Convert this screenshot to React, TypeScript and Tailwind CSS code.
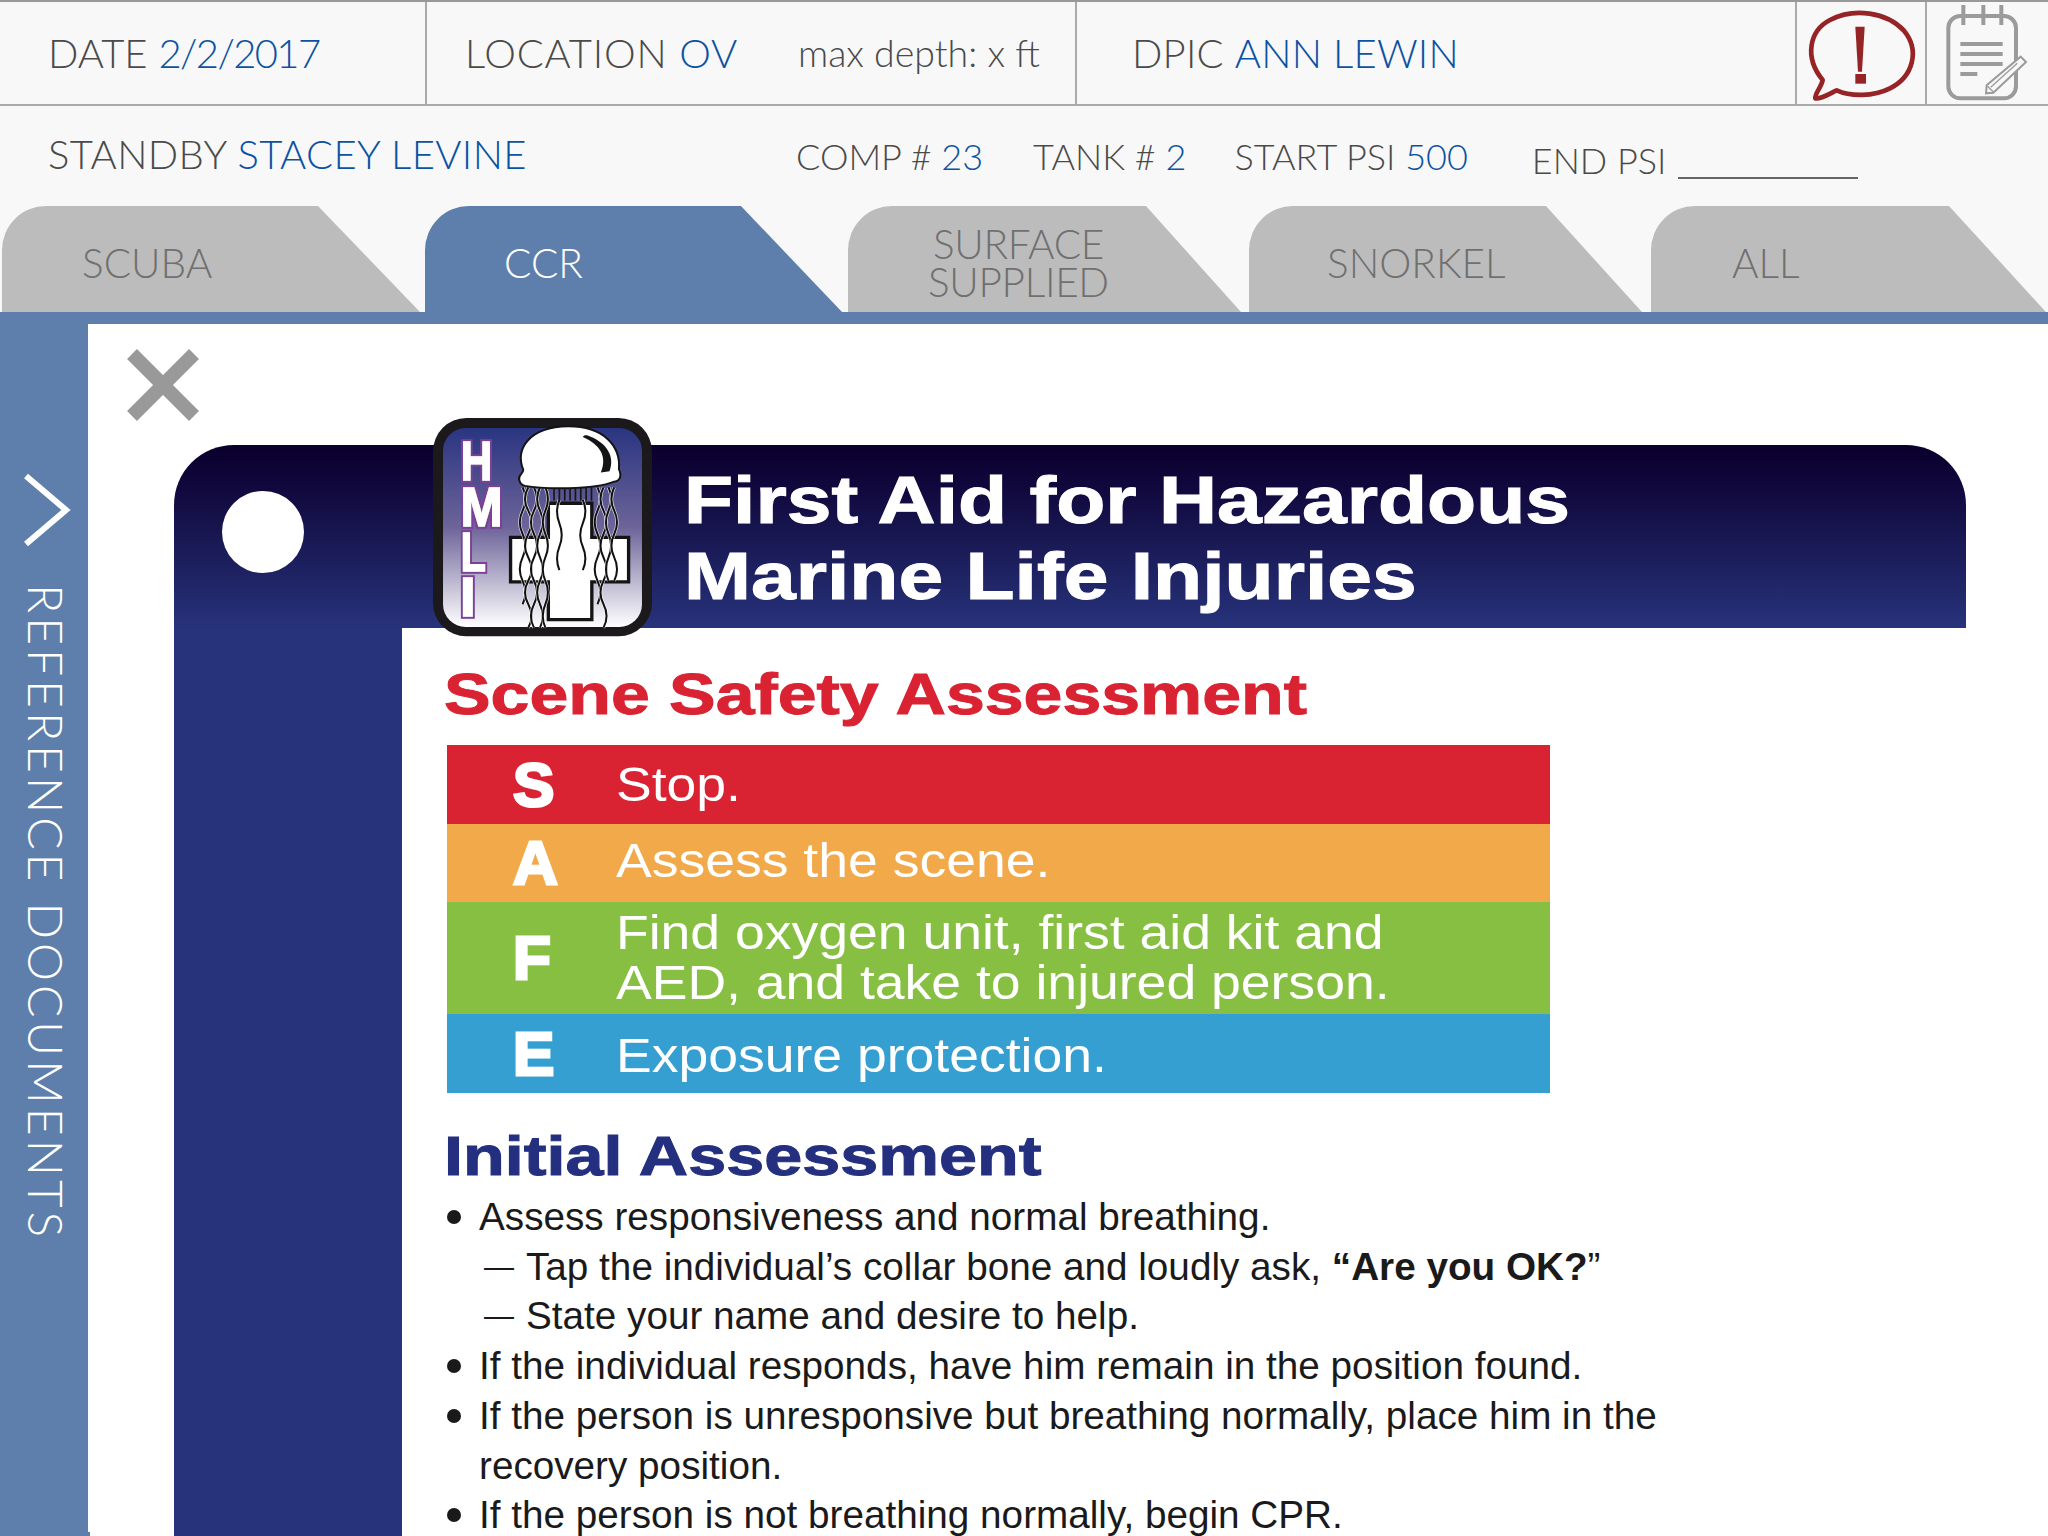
import React from 'react'

const avenir = "font-['Lato','Open_Sans',sans-serif] font-light"
const helv = "font-['Liberation_Sans',Arial,sans-serif]"

const tabs = [
  { label: ['SCUBA'], cls: 'w-[418px] ml-[2px] pl-[80px] [clip-path:polygon(0_0,316px_0,100%_100%,0_100%)]' },
  { label: ['CCR'], active: true, cls: 'w-[417px] ml-[5px] pl-[79px] [clip-path:polygon(0_0,316px_0,100%_100%,0_100%)]' },
  { label: ['SURFACE', 'SUPPLIED'], cls: 'w-[393px] ml-[6px] pl-[80px] tracking-[-0.3px] [clip-path:polygon(0_0,298px_0,100%_100%,0_100%)]' },
  { label: ['SNORKEL'], cls: 'w-[393px] ml-[8px] pl-[78px] [clip-path:polygon(0_0,297px_0,100%_100%,0_100%)]' },
  { label: ['ALL'], cls: 'w-[395px] ml-[9px] pl-[81px] [clip-path:polygon(0_0,298px_0,100%_100%,0_100%)]' },
]

const safeRows = [
  { letter: 'S', bg: 'bg-[#d92333]', h: 'h-[79px]', shift: '', lines: ['Stop.'] },
  { letter: 'A', bg: 'bg-[#f1a94a]', h: 'h-[78px]', shift: 'pb-[4px]', lines: ['Assess the scene.'] },
  { letter: 'F', bg: 'bg-[#87bf42]', h: 'h-[112px]', shift: '', lines: ['Find oxygen unit, first aid kit and', 'AED, and take to injured person.'] },
  { letter: 'E', bg: 'bg-[#349fd0]', h: 'h-[79px]', shift: 'pt-[4px]', lines: ['Exposure protection.'] },
]

function wave(x: number, y0: number, y1: number, amp: number) {
  let d = `M${x} ${y0}`
  let y = y0
  let dir = 1
  while (y < y1) {
    d += ` C${x + amp * dir} ${y + 25} ${x + amp * dir} ${y + 45} ${x} ${y + 70}`
    y += 70
    dir = -dir
  }
  return d
}

const tentacles = [
  wave(368, 262, 600, 12), wave(385, 262, 640, -14), wave(402, 262, 640, 13), wave(420, 262, 660, -12),
  wave(436, 262, 640, 11), wave(478, 300, 510, -10), wave(548, 300, 510, 11), wave(592, 262, 600, 12),
  wave(610, 262, 660, -13), wave(625, 262, 530, 11), wave(642, 262, 530, -12),
]

function Logo() {
  return (
    <svg viewBox="100 55 655 655" className="absolute left-[259px] top-[-27px] w-[219px] h-[219px]">
      <defs>
        <linearGradient id="logoBg" x1="0" y1="0" x2="0" y2="1">
          <stop offset="0" stopColor="#2a3581" />
          <stop offset="0.5" stopColor="#6d6499" />
          <stop offset="1" stopColor="#ffffff" />
        </linearGradient>
        <filter id="purpleEdge" x="-20%" y="-20%" width="140%" height="140%">
          <feMorphology in="SourceAlpha" operator="dilate" radius="5" result="fat" />
          <feFlood floodColor="#7b3f98" />
          <feComposite in2="fat" operator="in" result="edge" />
          <feMerge>
            <feMergeNode in="edge" />
            <feMergeNode in="SourceGraphic" />
          </feMerge>
        </filter>
      </defs>
      <rect x="100" y="55" width="655" height="653" rx="100" fill="#1b191b" />
      <rect x="130" y="85" width="595" height="595" rx="68" fill="url(#logoBg)" />
      <g filter="url(#purpleEdge)" fill="#fff" stroke="#fff" strokeWidth="5" fontFamily="'Liberation Sans',Arial,sans-serif" fontWeight="700" fontSize="168">
        <text x="183" y="240" textLength="94" lengthAdjust="spacingAndGlyphs">H</text>
        <text x="182" y="377" textLength="126" lengthAdjust="spacingAndGlyphs">M</text>
        <text x="183" y="513" textLength="75" lengthAdjust="spacingAndGlyphs">L</text>
        <text x="181" y="647" textLength="47" lengthAdjust="spacingAndGlyphs">I</text>
      </g>
      <path d="M445 310H575V412H685V545H575V658H445V545H332V412H445Z" fill="#fff" stroke="#141414" strokeWidth="10" />
      {tentacles.map((d, i) => (
        <g key={i} fill="none">
          <path d={d} stroke="#fff" strokeWidth="10" opacity="0.8" />
          <path d={d} stroke="#111" strokeWidth="6" />
        </g>
      ))}
      {[462, 478, 494, 510, 526, 542, 558, 574].map(x => (
        <path key={x} d={`M${x} 262V302`} stroke="#161616" strokeWidth="5" />
      ))}
      <path
        d="M358 240C353 226 370 222 370 210C346 150 383 82 505 80C612 80 662 140 656 208C664 226 662 244 640 246C580 270 430 268 375 258C366 256 360 250 358 240Z"
        fill="#fff"
        stroke="#141414"
        strokeWidth="6"
      />
      <path d="M548 112C552 104 560 106 570 110C620 130 645 170 628 214L602 218C622 170 600 135 548 112Z" fill="#141414" />
    </svg>
  )
}

function AlertIcon() {
  return (
    <svg viewBox="51 6 390 306" className="w-[130px] h-[102px]">
      <path
        d="M128 240C72 172 88 92 150 60C222 22 320 36 372 92C420 150 400 230 330 265C280 290 212 290 170 271C150 280 124 298 106 295C104 280 124 262 128 240Z"
        fill="none"
        stroke="#962325"
        strokeWidth="14"
        strokeLinejoin="round"
      />
      <path d="M226 80H254L246 215H234Z" fill="#962325" />
      <rect x="226" y="222" width="32" height="29" fill="#962325" />
    </svg>
  )
}

function NotepadIcon() {
  return (
    <svg viewBox="441 6 363 306" className="w-[121px] h-[102px]">
      <rect x="505" y="48" width="203" height="247" rx="36" fill="none" stroke="#9b9b9b" strokeWidth="12" />
      <path d="M550 15V75M610 15V75M664 15V75" stroke="#9b9b9b" strokeWidth="12" fill="none" />
      <path d="M541 132H668M541 162H668M541 192H668M541 222H592" stroke="#9b9b9b" strokeWidth="12" fill="none" />
      <path d="M618 280L620 256L722 170L738 186L640 278Z" fill="#f8f8f8" stroke="#9b9b9b" strokeWidth="6" />
      <path d="M622 258L640 276M632 262L712 190" stroke="#9b9b9b" strokeWidth="4" fill="none" />
    </svg>
  )
}

function Bullet({ children }: { children: React.ReactNode }) {
  return (
    <div className="flex">
      <span className="w-[14px] h-[14px] mt-[18px] ml-[3px] mr-[18px] shrink-0 rounded-full bg-[#1a1a1a]" />
      <div>{children}</div>
    </div>
  )
}

function SubLine({ children }: { children: React.ReactNode }) {
  return (
    <div className="flex pl-[40px]">
      <span className="w-[42px] text-[30px] shrink-0">—</span>
      <div>{children}</div>
    </div>
  )
}

export default function App() {
  return (
    <div className="w-[2048px] h-[1536px] overflow-hidden bg-[#f8f8f8] flex flex-col">
      {/* top bar */}
      <div className={`h-[106px] shrink-0 flex border-t-2 border-t-[#999] border-b-2 border-b-[#aaa] text-[#4a4a4a] text-[40px] ${avenir}`}>
        <div className="w-[427px] shrink-0 border-r-2 border-[#aaa] pl-[48px] flex items-center">
          DATE&nbsp;<span className="text-[#0b52a3] tracking-[-1.6px]">2/2/2017</span>
        </div>
        <div className="w-[650px] shrink-0 border-r-2 border-[#aaa] pl-[38px] flex items-center tracking-[0.8px]">
          LOCATION&nbsp;<span className="text-[#0b52a3]">OV</span>
          <span className="ml-[60px] text-[37.5px] tracking-normal">max depth: x ft</span>
        </div>
        <div className="w-[720px] shrink-0 border-r-2 border-[#aaa] pl-[55px] flex items-center tracking-[0.2px]">
          DPIC&nbsp;<span className="text-[#0b52a3]">ANN LEWIN</span>
        </div>
        <div className="w-[130px] shrink-0 border-r-2 border-[#aaa]">
          <AlertIcon />
        </div>
        <NotepadIcon />
      </div>

      {/* standby row */}
      <div className={`h-[100px] shrink-0 relative flex text-[#4a4a4a] ${avenir}`}>
        <div className="w-[796px] shrink-0 pl-[48px] pt-[18px] text-[40px] tracking-[0.4px]">
          STANDBY <span className="text-[#0b52a3]">STACEY LEVINE</span>
        </div>
        <div className="pt-[23px] text-[36px] flex">
          <span>COMP # <span className="text-[#0b52a3]">23</span></span>
          <span className="ml-[50px]">TANK # <span className="text-[#0b52a3]">2</span></span>
          <span className="ml-[48px]">START PSI <span className="text-[#0b52a3]">500</span></span>
          <span className="ml-[64px] mt-[4px]">END PSI</span>
          <span className="ml-[12px] w-[180px] h-[2px] mt-[48px] bg-[#666]" />
        </div>
      </div>

      {/* tabs */}
      <div className={`h-[106px] shrink-0 flex ${avenir}`}>
        {tabs.map(t => (
          <div
            key={t.label[0]}
            className={`${t.cls} shrink-0 rounded-tl-[44px] flex flex-col justify-center pt-[8px] text-[40.5px] leading-[38px] ${t.active ? 'bg-[#5e7fab] text-white' : 'bg-[#bcbcbc] text-[#707070]'}`}
          >
            <div className="w-fit text-center">
              {t.label.map(l => (
                <div key={l}>{l}</div>
              ))}
            </div>
          </div>
        ))}
      </div>
      <div className="h-[12px] shrink-0 bg-[#5e7fab]" />

      {/* main */}
      <div className="flex-1 flex bg-white">
        <div className="w-[88px] shrink-0 bg-[#5e7fab] relative flex flex-col items-center pt-[150px] text-white">
          <svg viewBox="0 0 88 80" className="w-[88px] h-[80px] -mt-[4px]">
            <path d="M26 6L66 40L26 74" fill="none" stroke="#fff" strokeWidth="6" />
          </svg>
          <div className={`mt-[34px] ml-[3px] text-[48px] leading-none tracking-[4px] whitespace-nowrap [writing-mode:vertical-rl] ${avenir}`}>
            REFERENCE DOCUMENTS
          </div>
          <div className="absolute right-[-2px] bottom-0 w-[2px] h-[8px] bg-[#5e7fab]" />
        </div>

        <div className="flex-1 pt-[25px] min-w-0">
          <svg viewBox="0 0 72 72" className="w-[72px] h-[72px] ml-[39px] mb-[24px]">
            <path d="M5 5L67 67M67 5L5 67" stroke="#999" strokeWidth="14" fill="none" />
          </svg>

          <div className={`w-[1792px] ml-[86px] ${helv}`}>
            {/* card header */}
            <div className="relative h-[183px] rounded-t-[60px] bg-gradient-to-b from-[#0a002c] to-[#27337b] pl-[510px] pt-[17px] text-white">
              <span className="absolute left-[48px] top-[46px] w-[82px] h-[82px] rounded-full bg-white" />
              <Logo />
              <h1 className="text-[67px] leading-[76px] font-bold whitespace-nowrap origin-left scale-x-[1.2] [-webkit-text-stroke:1px]">
                First Aid for Hazardous
                <br />
                Marine Life Injuries
              </h1>
            </div>

            <div className="flex">
              <div className="w-[228px] shrink-0 h-[908px] bg-[#27337b]" />
              <div className="pl-[42px] flex-1">
                <h2 className="mt-[31px] text-[57px] leading-[70px] font-bold text-[#d92333] whitespace-nowrap origin-left scale-x-[1.225] [-webkit-text-stroke:1px]">
                  Scene Safety Assessment
                </h2>
                <div className="ml-[3px] mt-[16px] w-[1103px] text-white">
                  {safeRows.map(r => (
                    <div key={r.letter} className={`${r.bg} ${r.h} flex items-center`}>
                      <span className="w-[66px] ml-[66px] text-[62px] font-bold leading-none [-webkit-text-stroke:3px_white]">{r.letter}</span>
                      <div className={`${r.shift} ml-[37px] text-[48px] leading-[50px] whitespace-nowrap origin-left scale-x-[1.115]`}>
                        {r.lines.map(l => (
                          <div key={l}>{l}</div>
                        ))}
                      </div>
                    </div>
                  ))}
                </div>
                <h2 className="mt-[30px] text-[56px] leading-[66px] font-bold text-[#24307f] whitespace-nowrap origin-left scale-x-[1.22] [-webkit-text-stroke:1px]">
                  Initial Assessment
                </h2>
                <div className="mt-[3px] text-[38.7px] leading-[49.7px] text-[#1a1a1a] whitespace-nowrap">
                  <Bullet>Assess responsiveness and normal breathing.</Bullet>
                  <SubLine>
                    Tap the individual’s collar bone and loudly ask, <b>“Are you OK?</b>”
                  </SubLine>
                  <SubLine>State your name and desire to help.</SubLine>
                  <Bullet>If the individual responds, have him remain in the position found.</Bullet>
                  <Bullet>
                    If the person is unresponsive but breathing normally, place him in the
                    <br />
                    recovery position.
                  </Bullet>
                  <Bullet>If the person is not breathing normally, begin CPR.</Bullet>
                </div>
              </div>
            </div>
          </div>
        </div>
      </div>
    </div>
  )
}
